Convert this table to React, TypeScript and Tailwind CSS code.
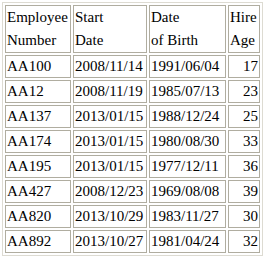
const rows = [
  { id: "AA100", start: "2008/11/14", birth: "1991/06/04", age: 17 },
  { id: "AA12", start: "2008/11/19", birth: "1985/07/13", age: 23 },
  { id: "AA137", start: "2013/01/15", birth: "1988/12/24", age: 25 },
  { id: "AA174", start: "2013/01/15", birth: "1980/08/30", age: 33 },
  { id: "AA195", start: "2013/01/15", birth: "1977/12/11", age: 36 },
  { id: "AA427", start: "2008/12/23", birth: "1969/08/08", age: 39 },
  { id: "AA820", start: "2013/10/29", birth: "1983/11/27", age: 30 },
  { id: "AA892", start: "2013/10/27", birth: "1981/04/24", age: 32 },
];

const cell =
  "border border-[#b0ada0] px-[1px] py-0 align-top text-left font-normal whitespace-nowrap";

const App = () => {
  return (
    <div className="h-[263px] w-[266px] overflow-hidden bg-white p-[2px] font-['Liberation_Serif',serif] text-[15px] text-black">
      <table className="table-fixed border-separate border-spacing-[2px] border border-[#dddbd2]">
        <thead>
          <tr className="leading-[23px]">
            <th className={`${cell} w-[66px]`}>
              Employee
              <br />
              Number
            </th>
            <th className={`${cell} w-[74px]`}>
              Start
              <br />
              Date
            </th>
            <th className={`${cell} w-[77px]`}>
              Date
              <br />
              of Birth
            </th>
            <th className={`${cell} w-[32px]`}>
              Hire
              <br />
              Age
            </th>
          </tr>
        </thead>
        <tbody>
          {rows.map((r) => (
            <tr key={r.id} className="leading-[21px]">
              <td className={cell}>{r.id}</td>
              <td className={cell}>{r.start}</td>
              <td className={cell}>{r.birth}</td>
              <td className={`${cell} text-right`}>{r.age}</td>
            </tr>
          ))}
        </tbody>
      </table>
    </div>
  );
};

export default App;
